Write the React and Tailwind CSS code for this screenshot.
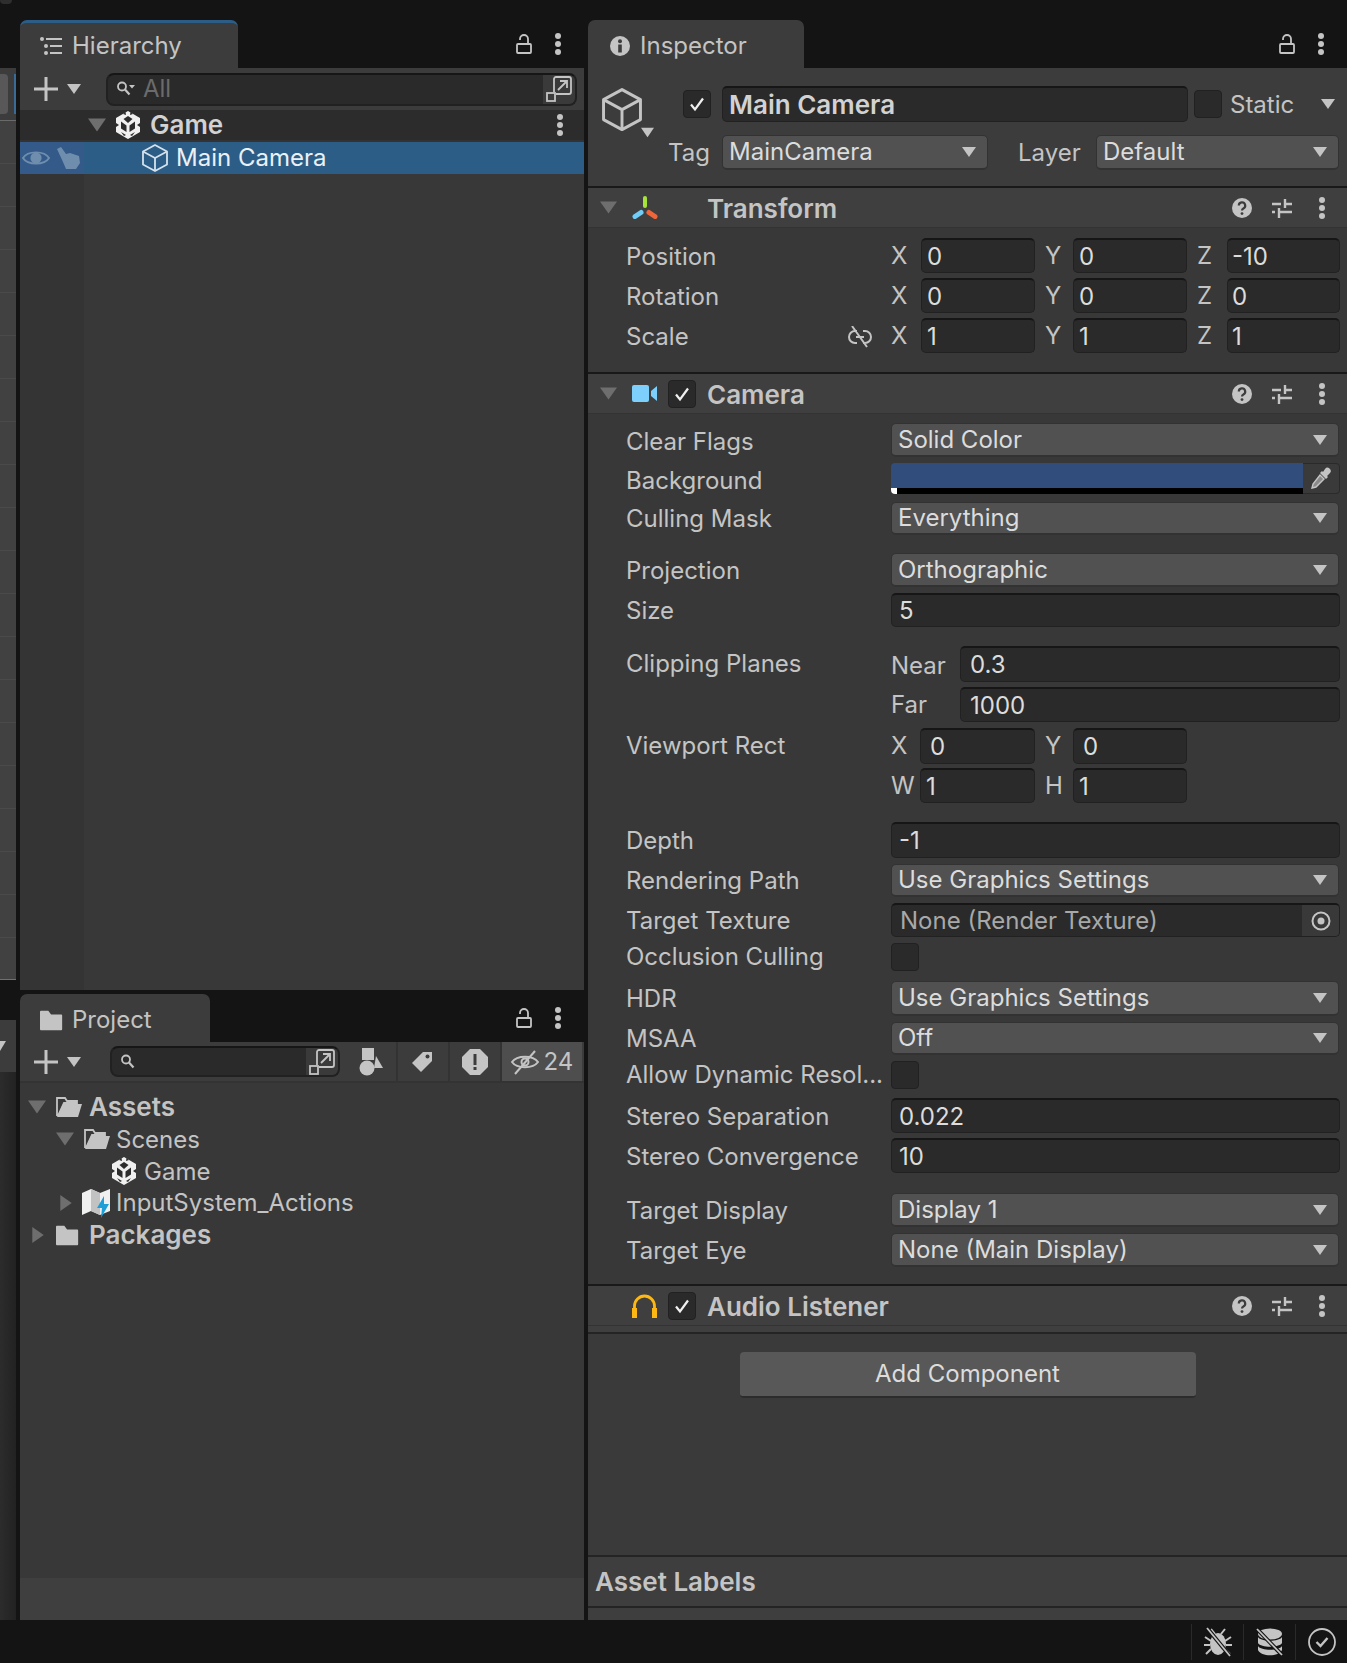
const Tri = ({ dir = 'down', color = '#c4c4c4', size = 14 }) => (
  <svg width={size} height={size} viewBox="0 0 14 14" className="shrink-0">
    {dir === 'down' ? <polygon points="0,2 14,2 7,12" fill={color} /> : <polygon points="2,0 12,7 2,14" fill={color} />}
  </svg>
);

const Dots = () => (
  <svg width="8" height="24" viewBox="0 0 8 24" className="shrink-0">
    <circle cx="4" cy="4" r="3" fill="#c4c4c4" />
    <circle cx="4" cy="12" r="3" fill="#c4c4c4" />
    <circle cx="4" cy="20" r="3" fill="#c4c4c4" />
  </svg>
);

const Lock = () => (
  <svg width="16" height="20" viewBox="0 0 16 20" fill="none" stroke="#c4c4c4" strokeWidth="1.8" className="shrink-0">
    <rect x="1" y="10" width="14" height="9" rx="1" />
    <path d="M12 10V5a4 4 0 0 0-8 0v1" />
  </svg>
);

const Plus = () => (
  <svg width="24" height="24" viewBox="0 0 24 24" className="shrink-0">
    <path d="M10.5 0h3v10.5H24v3H13.5V24h-3V13.5H0v-3h10.5z" fill="#c4c4c4" />
  </svg>
);

const SearchIcon = ({ caret }) => (
  <svg width="20" height="18" viewBox="0 0 20 18" fill="none" className="shrink-0">
    <circle cx="6" cy="6.5" r="4" stroke="#c4c4c4" strokeWidth="1.8" />
    <path d="M9 9.5l4.5 5" stroke="#c4c4c4" strokeWidth="2.2" />
    {caret && <polygon points="13,5 19,5 16,8.5" fill="#c4c4c4" />}
  </svg>
);

const Popout = () => (
  <svg width="26" height="26" viewBox="0 0 26 26" fill="none" stroke="#c4c4c4" strokeWidth="1.8" className="shrink-0">
    <path d="M8 16V3a2 2 0 0 1 2-2h13a2 2 0 0 1 2 2v13a2 2 0 0 1-2 2H10" />
    <rect x="1" y="17" width="8" height="8" />
    <path d="M12 14l9-9M14 5h7v7" />
  </svg>
);

const UnityLogo = ({ size = 24 }) => (
  <svg width={size} height={size * 1.17} viewBox="0 0 24 28" className="shrink-0">
    <polygon points="12,0 24,7 24,21 12,28 0,21 0,7" fill="#f0f0f0" />
    <polygon points="12,5 7.5,8 12,12 16.5,8" fill="#2c2c2c" />
    <polygon points="5,10.5 10.5,14.5 10.5,21 5,17.5" fill="#2c2c2c" />
    <polygon points="19,10.5 13.5,14.5 13.5,21 19,17.5" fill="#2c2c2c" />
    <polygon points="0,12 3,14 0,16" fill="#2c2c2c" />
    <polygon points="24,12 21,14 24,16" fill="#2c2c2c" />
    <polygon points="7,3 9.5,1 10,4" fill="#2c2c2c" />
    <polygon points="17,3 14.5,1 14,4" fill="#2c2c2c" />
    <polygon points="5,21 10,24 8,25" fill="#2c2c2c" />
    <polygon points="19,21 14,24 16,25" fill="#2c2c2c" />
  </svg>
);

const Cube = ({ size = 26, stroke = '#c4c4c4', w = 1.8 }) => (
  <svg width={size} height={size * 1.08} viewBox="0 0 26 28" fill="none" stroke={stroke} strokeWidth={w} strokeLinejoin="round" className="shrink-0">
    <polygon points="13,1 25,7.5 25,20.5 13,27 1,20.5 1,7.5" />
    <path d="M1 7.5L13 14l12-6.5M13 14v13" />
  </svg>
);

const Folder = ({ open, w = 26 }) => (
  <svg width={w} height="22" viewBox="0 0 26 22" className="shrink-0">
    {open ? (
      <g>
        <path d="M1 20V2h8l2 3h10v2H8L2 20" fill="none" stroke="#c4c4c4" strokeWidth="1.8" />
        <polygon points="7,8 26,8 22,21 1,21" fill="#c4c4c4" />
      </g>
    ) : (
      <path d="M0 2a1 1 0 0 1 1-1h8l3 4h11a1 1 0 0 1 1 1v15a1 1 0 0 1-1 1H1a1 1 0 0 1-1-1z" fill="#c4c4c4" />
    )}
  </svg>
);

const Check = () => (
  <svg width="18" height="16" viewBox="0 0 18 16" fill="none" stroke="#f0f0f0" strokeWidth="2.2">
    <path d="M3 8.5l4 5 8-11" />
  </svg>
);

const Checkbox = ({ on, className = '' }) => (
  <div className={`w-[28px] h-[28px] shrink-0 flex items-center justify-center rounded-[4px] bg-[#2a2a2a] border border-[#212121] ${className}`}>
    {on && <Check />}
  </div>
);

const Help = () => (
  <svg width="20" height="20" viewBox="0 0 20 20" className="shrink-0">
    <circle cx="10" cy="10" r="10" fill="#c4c4c4" />
    <path d="M6.8 7.6a3.2 3.2 0 1 1 4.6 2.9c-1 .5-1.4 1-1.4 2" fill="none" stroke="#3c3c3c" strokeWidth="2.2" />
    <circle cx="10" cy="15.6" r="1.4" fill="#3c3c3c" />
  </svg>
);

const Sliders = () => (
  <svg width="20" height="20" viewBox="0 0 20 20" fill="none" stroke="#c4c4c4" strokeWidth="2.4" className="shrink-0">
    <path d="M0 6h9M13 6h7M13 1v9M0 14h3M7 14h13M7 10v10" />
  </svg>
);

const HeaderIcons = () => (
  <div className="ml-auto flex items-center pr-[5px]">
    <div className="w-[40px] flex justify-center"><Help /></div>
    <div className="w-[40px] flex justify-center"><Sliders /></div>
    <div className="w-[40px] flex justify-center"><Dots /></div>
  </div>
);

const Label = ({ children, className = '' }) => (
  <span className={`text-[24px] leading-none text-[#c4c4c4] whitespace-nowrap ${className}`}>{children}</span>
);

const Dropdown = ({ children, className = 'flex-1 mr-[8px]' }) => (
  <div className={`h-full flex items-center justify-between pl-[6px] pr-[11px] rounded-[5px] bg-[#515151] border border-[#323232] border-b-2 ${className}`}>
    <span className="text-[24px] leading-none text-[#dcdcdc] whitespace-nowrap">{children}</span>
    <Tri />
  </div>
);

const Field = ({ children, className = 'flex-1 mr-[7px] pl-[7px]' }) => (
  <div className={`h-full flex items-center rounded-[5px] bg-[#2a2a2a] border border-[#212121] border-t-2 border-t-[#161616] ${className}`}>
    <span className="pt-[1px] text-[24px] leading-none text-[#dcdcdc]">{children}</span>
  </div>
);

const Row = ({ label, className, children, extra, labelClass = 'pt-[2px]' }) => (
  <div className={`flex ${className}`}>
    <div className={`w-[303px] shrink-0 pl-[38px] pr-[19px] flex items-center justify-between ${labelClass}`}>
      <Label>{label}</Label>
      {extra}
    </div>
    {children}
  </div>
);

const SmallField = ({ children, className = 'w-[114px] pl-[5px]' }) => <Field className={`shrink-0 ${className}`}>{children}</Field>;

const Vec3 = ({ v }) => (
  <div className="flex items-center h-full">
    <Label className="w-[30px]">X</Label>
    <SmallField>{v[0]}</SmallField>
    <Label className="w-[38px] pl-[10px]">Y</Label>
    <SmallField>{v[1]}</SmallField>
    <Label className="w-[40px] pl-[10px]">Z</Label>
    <SmallField className="w-[113px] pl-[4px]">{v[2]}</SmallField>
  </div>
);

const TransformIcon = () => (
  <svg width="26" height="23" viewBox="0 0 26 23" className="shrink-0">
    <rect x="11" y="0" width="4" height="12" rx="2" fill="#a6e43a" />
    <line x1="3" y1="20.5" x2="9" y2="16.5" stroke="#6fcdf6" strokeWidth="5" strokeLinecap="round" />
    <line x1="17" y1="16.5" x2="23" y2="20.5" stroke="#f0663a" strokeWidth="5" strokeLinecap="round" />
  </svg>
);

const CamIcon = () => (
  <svg width="25" height="17" viewBox="0 0 25 17" className="shrink-0">
    <rect x="0" y="0" width="17" height="17" rx="2" fill="#7cd0fb" />
    <polygon points="19,6 25,1 25,16 19,11" fill="#7cd0fb" />
  </svg>
);

const HeadIcon = () => (
  <svg width="25" height="24" viewBox="0 0 25 24" fill="none" className="shrink-0">
    <path d="M2.5 24V12a10 10 0 0 1 20 0v12" stroke="#fdb813" strokeWidth="2.8" />
    <rect x="0" y="14" width="5" height="10" fill="#fdb813" />
    <rect x="20" y="14" width="5" height="10" fill="#fdb813" />
  </svg>
);

const InputActions = () => (
  <svg width="28" height="30" viewBox="0 0 28 30" className="shrink-0">
    <polygon points="0,5 9,1 18,5 28,1 28,23 18,27 9,23 0,27" fill="#f0f0f0" />
    <polygon points="9,1 18,5 18,27 9,23" fill="#c2c2c2" />
    <polygon points="22,8 15,20 20,20 19,30 27,16 22,16" fill="#1f9fd8" />
  </svg>
);

const sliverRows = [163, 206, 249, 292, 335, 378, 421, 465, 507, 550, 593, 637, 680, 722, 766, 808, 852, 895, 937];

const Sliver = () => (
  <div className="w-[16px] shrink-0 flex flex-col">
    <div className="h-[4px] w-[12px] rounded-b-[4px] bg-[#2e2e2e]" />
    <div className="h-[64px]" />
    <div className="h-[52px] bg-[#3c3c3c] flex items-center justify-between">
      <div className="w-[8px] h-[40px] rounded-r-[4px] bg-[#585858]" />
      <div className="w-[2px] h-[40px] bg-[#3a6a96]" />
    </div>
    <div className="h-[1px] bg-[#6a6a6a]" />
    {sliverRows.map((y) => (
      <div key={y} className="h-[43px] shrink-0 bg-[#414141] border-b border-[#4a4a4a]" />
    ))}
    <div className="h-[42px] bg-[#414141] border-b border-[#707070]" />
    <div className="h-[40px]" />
    <div className="h-[52px] bg-[#3c3c3c] flex items-center">
      <svg width="6" height="12" viewBox="0 0 6 12"><polygon points="0,1 6,1 0,11" fill="#c4c4c4" /></svg>
    </div>
    <div className="flex-1 bg-gradient-to-r from-[#2c2c2c] to-[#222222]" />
  </div>
);

const ListIcon = () => (
  <svg width="22" height="18" viewBox="0 0 22 18" className="shrink-0">
    <circle cx="2" cy="2" r="2" fill="#c4c4c4" />
    <circle cx="6" cy="9" r="2" fill="#c4c4c4" />
    <circle cx="6" cy="16" r="2" fill="#c4c4c4" />
    <path d="M6 1h16v2H6zM10 8h12v2H10zM10 15h12v2H10z" fill="#c4c4c4" />
  </svg>
);

const Hierarchy = () => (
  <div className="h-[970px] flex flex-col bg-[#383838]">
    <div className="h-[48px] bg-[#141414] flex justify-between shrink-0">
      <div className="w-[218px] flex items-center pl-[20px] bg-[#3c3c3c] rounded-t-[7px] border-t-[3px] border-[#2c5d87]">
        <ListIcon />
        <span className="text-[24px] leading-none text-[#c4c4c4] ml-[10px]">Hierarchy</span>
      </div>
      <div className="flex items-center pr-[22px] gap-[22px]">
        <Lock />
        <Dots />
      </div>
    </div>
    <div className="h-[42px] shrink-0 bg-[#3c3c3c] flex items-center pl-[14px] pr-[7px]">
      <Plus />
      <div className="ml-[9px]"><Tri /></div>
      <div className="ml-[25px] flex-1 h-[33px] flex items-center bg-[#2a2a2a] rounded-[8px] border-2 border-[#212121] border-t-[#161616] pl-[8px]">
        <SearchIcon caret />
        <span className="ml-[7px] text-[24px] leading-none text-[#6b6b6b]">All</span>
        <div className="ml-auto w-[32px] h-full flex items-center justify-center bg-[#3a3a3a] rounded-r-[6px]">
          <Popout />
        </div>
      </div>
    </div>
    <div className="h-[30px] shrink-0 bg-[#2c2c2c] flex items-center pl-[68px] pr-[20px]">
      <Tri color="#6e6e6e" size={18} />
      <div className="ml-[10px]"><UnityLogo /></div>
      <span className="ml-[10px] text-[26px] font-semibold leading-none text-[#d2d2d2]">Game</span>
      <div className="ml-auto"><Dots /></div>
    </div>
    <div className="h-[2px] shrink-0 bg-[#333333]" />
    <div className="h-[32px] shrink-0 bg-[#2c5d87] flex items-center">
      <div className="w-[64px] h-full bg-[#335a88] flex items-center pl-[2px] gap-[7px]">
        <svg width="28" height="20" viewBox="0 0 30 20" fill="none" className="shrink-0">
          <path d="M1 10C6 2 24 2 29 10C24 18 6 18 1 10Z" stroke="#6f8eae" strokeWidth="2" />
          <circle cx="15" cy="10" r="6" fill="#6f8eae" />
        </svg>
        <svg width="23" height="22" viewBox="0 0 23 22" className="shrink-0">
          <path d="M0 2L4 0L9 7L13 6L22 9L23 16L19 22H9L6 15z" fill="#6f8eae" />
        </svg>
      </div>
      <div className="ml-[58px]"><Cube stroke="#d6e2ec" /></div>
      <span className="ml-[8px] text-[24px] leading-none text-[#eaf1f6]">Main Camera</span>
    </div>
    <div className="flex-1 flex">
      <div className="w-[64px] bg-[#343434]" />
    </div>
  </div>
);

const FilterBtn = ({ children, className = 'w-[50px] bg-[#3c3c3c]' }) => (
  <div className={`h-full flex items-center justify-center gap-[5px] ${className}`}>{children}</div>
);

const TreeRow = ({ className, tri, children }) => (
  <div className={`h-[32px] flex items-center ${className}`}>
    {tri}
    {children}
  </div>
);

const Project = () => (
  <div className="mt-[4px] flex-1 flex flex-col bg-[#383838]">
    <div className="h-[48px] bg-[#141414] flex justify-between shrink-0">
      <div className="w-[190px] flex items-center pl-[20px] pt-[3px] bg-[#3c3c3c] rounded-t-[7px]">
        <Folder w={24} />
        <span className="text-[24px] leading-none text-[#c4c4c4] ml-[8px]">Project</span>
      </div>
      <div className="flex items-center pr-[22px] gap-[22px]">
        <Lock />
        <Dots />
      </div>
    </div>
    <div className="h-[41px] shrink-0 bg-[#3c3c3c] flex items-center pl-[14px] pr-[2px] border-b-2 border-[#333333]">
      <Plus />
      <div className="ml-[9px]"><Tri /></div>
      <div className="ml-[29px] w-[230px] h-[31px] flex items-center bg-[#2a2a2a] rounded-[8px] border-2 border-[#212121] border-t-[#161616] pl-[8px]">
        <SearchIcon />
        <div className="ml-auto w-[32px] h-full flex items-center justify-center bg-[#3a3a3a] rounded-r-[6px]">
          <Popout />
        </div>
      </div>
      <div className="ml-[6px] flex-1 h-full flex gap-[2px] bg-[#333333]">
        <FilterBtn>
          <svg width="24" height="28" viewBox="0 0 24 28" className="shrink-0">
            <rect x="3" y="0" width="12" height="12" fill="#c4c4c4" />
            <circle cx="8" cy="20" r="7.5" fill="#c4c4c4" />
            <polygon points="17,8 24,20 15,20" fill="#c4c4c4" />
          </svg>
        </FilterBtn>
        <FilterBtn className="w-[50px] bg-[#3c3c3c] pr-[3px]">
          <svg width="22" height="22" viewBox="0 0 22 22" className="shrink-0">
            <path d="M12 1h9v9L10 21 1 12z" fill="#c4c4c4" />
            <circle cx="16.5" cy="5.5" r="2" fill="#3c3c3c" />
          </svg>
        </FilterBtn>
        <FilterBtn>
          <svg width="26" height="26" viewBox="0 0 26 26" className="shrink-0">
            <polygon points="8,0 18,0 26,8 26,18 18,26 8,26 0,18 0,8" fill="#c4c4c4" />
            <rect x="11.5" y="5" width="3" height="11" fill="#3c3c3c" />
            <rect x="11.5" y="18" width="3" height="3" fill="#3c3c3c" />
          </svg>
        </FilterBtn>
        <FilterBtn className="flex-1 bg-[#4e4e4e]">
          <svg width="28" height="26" viewBox="0 0 28 26" fill="none" stroke="#c4c4c4" strokeWidth="2" className="shrink-0">
            <path d="M1 13C6 6 22 6 27 13C22 20 6 20 1 13Z" />
            <circle cx="14" cy="13" r="3.5" />
            <path d="M4 25L24 2" />
          </svg>
          <span className="text-[24px] leading-none text-[#c4c4c4]">24</span>
        </FilterBtn>
      </div>
    </div>
    <div className="pt-[8px] flex-1">
      <TreeRow className="pl-[8px]" tri={<Tri color="#6e6e6e" size={18} />}>
        <div className="ml-[10px]"><Folder open /></div>
        <span className="ml-[7px] text-[26px] font-semibold leading-none text-[#c4c4c4]">Assets</span>
      </TreeRow>
      <TreeRow className="pl-[36px]" tri={<Tri color="#6e6e6e" size={18} />}>
        <div className="ml-[10px]"><Folder open /></div>
        <span className="ml-[6px] pt-[2px] text-[24px] leading-none text-[#c4c4c4]">Scenes</span>
      </TreeRow>
      <TreeRow className="pl-[92px]">
        <UnityLogo />
        <span className="ml-[8px] pt-[2px] text-[24px] leading-none text-[#c4c4c4]">Game</span>
      </TreeRow>
      <TreeRow className="pl-[38px]" tri={<Tri dir="right" color="#6e6e6e" size={16} />}>
        <div className="ml-[8px]"><InputActions /></div>
        <span className="ml-[6px] text-[24px] leading-none text-[#c4c4c4]">InputSystem_Actions</span>
      </TreeRow>
      <TreeRow className="pl-[10px]" tri={<Tri dir="right" color="#6e6e6e" size={16} />}>
        <div className="ml-[10px]"><Folder w={24} /></div>
        <span className="ml-[9px] text-[26px] font-semibold leading-none text-[#c4c4c4]">Packages</span>
      </TreeRow>
    </div>
    <div className="h-[42px] shrink-0 bg-[#3f3f3f]" />
  </div>
);

const CompHeader = ({ fold, icon, check, title }) => (
  <div className="h-[40px] shrink-0 flex items-center bg-[#3f3f3f] border-b border-[#333333] pl-[12px]">
    <div className="w-[17px] shrink-0">{fold && <Tri color="#6e6e6e" size={17} />}</div>
    <div className="ml-[15px] w-[36px] shrink-0">{icon}</div>
    <div className="w-[39px] shrink-0">{check && <Checkbox on />}</div>
    <span className="pt-[2px] text-[26px] font-semibold leading-none text-[#c4c4c4] whitespace-nowrap">{title}</span>
    <HeaderIcons />
  </div>
);

const Inspector = () => (
  <div className="flex-1 flex flex-col bg-[#383838]">
    <div className="h-[48px] bg-[#141414] flex justify-between shrink-0">
      <div className="w-[216px] flex items-center pl-[22px] pt-[3px] bg-[#3c3c3c] rounded-t-[7px]">
        <svg width="20" height="20" viewBox="0 0 20 20" className="shrink-0">
          <circle cx="10" cy="10" r="10" fill="#c4c4c4" />
          <rect x="8.2" y="8.5" width="3.6" height="8" fill="#3c3c3c" />
          <circle cx="10" cy="5.2" r="2" fill="#3c3c3c" />
        </svg>
        <span className="text-[24px] leading-none text-[#c4c4c4] ml-[10px]">Inspector</span>
      </div>
      <div className="flex items-center pr-[22px] gap-[22px]">
        <Lock />
        <Dots />
      </div>
    </div>

    <div className="h-[118px] shrink-0 bg-[#3c3c3c] pt-[18px]">
      <div className="h-[36px] flex items-center">
        <div className="ml-[14px] mt-[12px] w-[40px] relative">
          <Cube size={40} w={1.9} />
          <div className="absolute left-[39px] top-[38px]"><Tri size={13} /></div>
        </div>
        <Checkbox on className="ml-[41px]" />
        <div className="ml-[11px] w-[466px] h-[36px] flex items-center pl-[6px] rounded-[5px] bg-[#2a2a2a] border border-[#212121] border-t-2 border-t-[#161616]">
          <span className="pt-[1px] text-[26px] font-semibold leading-none text-[#d2d2d2]">Main Camera</span>
        </div>
        <Checkbox className="ml-[6px]" />
        <Label className="ml-[8px] pt-[2px]">Static</Label>
        <div className="ml-auto mr-[12px]"><Tri /></div>
      </div>
      <div className="mt-[13px] h-[35px] flex items-center">
        <Label className="ml-[80px] w-[54px]">Tag</Label>
        <Dropdown className="w-[266px] shrink-0">MainCamera</Dropdown>
        <Label className="ml-[30px] w-[78px]">Layer</Label>
        <Dropdown className="w-[243px] shrink-0">Default</Dropdown>
      </div>
    </div>
    <div className="h-[2px] shrink-0 bg-[#191919]" />

    <CompHeader fold icon={<TransformIcon />} title="Transform" />
    <Row label="Position" className="mt-[10px] h-[35px]"><Vec3 v={['0', '0', '-10']} /></Row>
    <Row label="Rotation" className="mt-[5px] h-[35px]"><Vec3 v={['0', '0', '0']} /></Row>
    <Row
      label="Scale"
      className="mt-[5px] h-[35px]"
      extra={
        <svg width="24" height="22" viewBox="0 0 24 22" fill="none" stroke="#c4c4c4" strokeWidth="2" className="shrink-0">
          <path d="M9 5H7a6 6 0 0 0 0 12h2M15 5h2a6 6 0 0 1 0 12h-2M8 11h8M4 0l15 21" />
        </svg>
      }
    >
      <Vec3 v={['1', '1', '1']} />
    </Row>
    <div className="mt-[19px] h-[2px] shrink-0 bg-[#191919]" />

    <CompHeader fold icon={<CamIcon />} check title="Camera" />
    <Row label="Clear Flags" labelClass="pt-[4px]" className="mt-[9px] h-[34px]"><Dropdown>Solid Color</Dropdown></Row>
    <Row label="Background" labelClass="pt-[4px]" className="mt-[6px] h-[31px]">
      <div className="flex-1 mr-[7px] flex rounded-[4px] overflow-hidden">
        <div className="flex-1 flex flex-col">
          <div className="flex-1 bg-[#304d7c]" />
          <div className="h-[6px] bg-black"><div className="w-[6px] h-full bg-white" /></div>
        </div>
        <div className="w-[37px] bg-[#3a3a3a] border-y border-r border-[#2a2a2a] rounded-r-[4px] flex items-center justify-center">
          <svg width="24" height="24" viewBox="0 0 24 24" className="shrink-0">
            <path d="M16 2a3 3 0 0 1 5 4l-3 3 1 1-2 2-6-6 2-2 1 1z" fill="#c4c4c4" />
            <path d="M11 8l4 4-8 8-4 1 1-4z" fill="#8a8a8a" stroke="#c4c4c4" strokeWidth="1.4" />
          </svg>
        </div>
      </div>
    </Row>
    <Row label="Culling Mask" labelClass="" className="mt-[8px] h-[33px]"><Dropdown>Everything</Dropdown></Row>
    <Row label="Projection" className="mt-[18px] h-[34px]"><Dropdown>Orthographic</Dropdown></Row>
    <Row label="Size" className="mt-[6px] h-[34px]"><Field>5</Field></Row>
    <Row label="Clipping Planes" labelClass="" className="mt-[19px] h-[36px]">
      <Label className="w-[69px] self-center pt-[3px]">Near</Label>
      <Field className="flex-1 mr-[7px] pl-[9px]">0.3</Field>
    </Row>
    <Row label="" className="mt-[5px] h-[35px]">
      <Label className="w-[69px] self-center">Far</Label>
      <Field className="flex-1 mr-[7px] pl-[9px]">1000</Field>
    </Row>
    <Row label="Viewport Rect" labelClass="" className="mt-[6px] h-[36px]">
      <div className="flex items-center h-full">
        <Label className="w-[29px]">X</Label>
        <SmallField className="w-[115px] pl-[9px]">0</SmallField>
        <Label className="w-[38px] pl-[10px]">Y</Label>
        <SmallField className="w-[114px] pl-[9px]">0</SmallField>
      </div>
    </Row>
    <Row label="" className="mt-[4px] h-[35px]">
      <div className="flex items-center h-full">
        <Label className="w-[29px]">W</Label>
        <SmallField className="w-[115px] pl-[5px]">1</SmallField>
        <Label className="w-[38px] pl-[10px]">H</Label>
        <SmallField className="w-[114px] pl-[5px]">1</SmallField>
      </div>
    </Row>
    <Row label="Depth" className="mt-[19px] h-[36px]"><Field>-1</Field></Row>
    <Row label="Rendering Path" labelClass="" className="mt-[6px] h-[33px]"><Dropdown>Use Graphics Settings</Dropdown></Row>
    <Row label="Target Texture" className="mt-[6px] h-[34px]">
      <div className="flex-1 mr-[7px] h-full flex items-center rounded-[5px] bg-[#2a2a2a] border border-[#212121] border-t-2 border-t-[#161616] overflow-hidden">
        <span className="pl-[8px] text-[24px] leading-none text-[#a8a8a8]">None (Render Texture)</span>
        <div className="ml-auto w-[37px] h-full bg-[#393939] flex items-center justify-center">
          <svg width="20" height="20" viewBox="0 0 20 20" fill="none" className="shrink-0">
            <circle cx="10" cy="10" r="8.5" stroke="#c4c4c4" strokeWidth="2" />
            <circle cx="10" cy="10" r="3.5" fill="#c4c4c4" />
          </svg>
        </div>
      </div>
    </Row>
    <Row label="Occlusion Culling" labelClass="" className="mt-[6px] h-[28px]"><Checkbox /></Row>
    <Row label="HDR" labelClass="" className="mt-[10px] h-[35px]"><Dropdown>Use Graphics Settings</Dropdown></Row>
    <Row label="MSAA" labelClass="" className="mt-[6px] h-[33px]"><Dropdown>Off</Dropdown></Row>
    <Row label="Allow Dynamic Resol..." labelClass="" className="mt-[6px] h-[28px]"><Checkbox /></Row>
    <Row label="Stereo Separation" className="mt-[9px] h-[35px]"><Field>0.022</Field></Row>
    <Row label="Stereo Convergence" className="mt-[5px] h-[35px]"><Field>10</Field></Row>
    <Row label="Target Display" className="mt-[20px] h-[34px]"><Dropdown>Display 1</Dropdown></Row>
    <Row label="Target Eye" className="mt-[6px] h-[34px]"><Dropdown>None (Main Display)</Dropdown></Row>
    <div className="mt-[17px] h-[2px] shrink-0 bg-[#191919]" />

    <CompHeader icon={<HeadIcon />} check title="Audio Listener" />
    <div className="h-[6px] shrink-0 bg-[#3f3f3f]" />
    <div className="h-[2px] shrink-0 bg-[#242424]" />

    <div className="flex-1 bg-[#3a3a3a] flex flex-col items-center pt-[18px]">
      <div className="w-[456px] h-[46px] flex items-center justify-center rounded-[4px] bg-[#585858] border-b-2 border-[#2c2c2c]">
        <span className="text-[24px] leading-none text-[#dcdcdc]">Add Component</span>
      </div>
    </div>
    <div className="h-[2px] shrink-0 bg-[#242424]" />
    <div className="h-[49px] shrink-0 bg-[#3e3e3e] flex items-center pl-[7px]">
      <span className="text-[26px] font-semibold leading-none text-[#c4c4c4]">Asset Labels</span>
    </div>
    <div className="h-[2px] shrink-0 bg-[#242424]" />
    <div className="h-[12px] shrink-0 bg-[#3e3e3e]" />
  </div>
);

const StatusBar = () => (
  <div className="h-[43px] shrink-0 flex justify-end items-center bg-[#141414]">
    <div className="w-[52px] h-[36px] border-l border-[#2a2a2a] flex items-center justify-center">
      <svg width="28" height="30" viewBox="0 0 28 30" className="shrink-0">
        <ellipse cx="14" cy="17" rx="8" ry="11" fill="#c4c4c4" />
        <path d="M7 2l4 5M21 2l-4 5M1 10l6 4M27 10l-6 4M0 18h6M28 18h-6M2 27l5-5M26 27l-5-5" stroke="#c4c4c4" strokeWidth="2" />
        <path d="M3 1l23 28" stroke="#141414" strokeWidth="4" />
        <path d="M3 1l23 28" stroke="#c4c4c4" strokeWidth="1.8" />
      </svg>
    </div>
    <div className="w-[52px] h-[36px] border-l border-[#2a2a2a] flex items-center justify-center">
      <svg width="28" height="28" viewBox="0 0 28 28" className="shrink-0">
        <ellipse cx="14" cy="6" rx="12" ry="5.5" fill="#c4c4c4" />
        <path d="M2 9c3 5 21 5 24 0v6c-3 5-21 5-24 0z" fill="#c4c4c4" />
        <path d="M2 18c3 5 21 5 24 0v4c-3 7-21 7-24 0z" fill="#c4c4c4" />
        <path d="M1 1l25 26" stroke="#141414" strokeWidth="4" />
        <path d="M1 1l25 26" stroke="#c4c4c4" strokeWidth="1.8" />
      </svg>
    </div>
    <div className="w-[52px] h-[36px] border-l border-[#2a2a2a] flex items-center justify-center">
      <svg width="28" height="28" viewBox="0 0 28 28" fill="none" stroke="#c4c4c4" className="shrink-0">
        <circle cx="14" cy="14" r="13" strokeWidth="1.8" />
        <path d="M8.5 14l4 4 7-8" strokeWidth="2.4" />
      </svg>
    </div>
  </div>
);

export default function App() {
  return (
    <div className="w-[1347px] h-[1663px] flex flex-col bg-[#141414] overflow-hidden font-['Inter',sans-serif]">
      <div className="h-[1620px] flex">
        <Sliver />
        <div className="ml-[4px] w-[564px] shrink-0 flex flex-col pt-[20px]">
          <Hierarchy />
          <Project />
        </div>
        <div className="ml-[4px] flex-1 flex flex-col pt-[20px]">
          <Inspector />
        </div>
      </div>
      <StatusBar />
    </div>
  );
}
